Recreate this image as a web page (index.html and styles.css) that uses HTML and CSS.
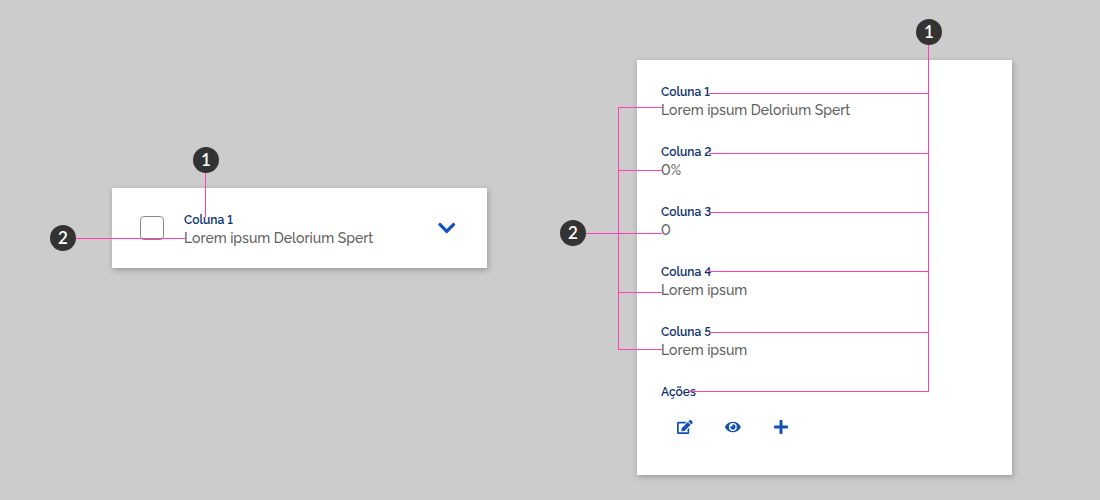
FILE: index.html
```html
<!DOCTYPE html>
<html lang="pt-BR">
<head>
<meta charset="utf-8">
<meta name="viewport" content="width=device-width, initial-scale=1">
<title>Tabela responsiva</title>
<link rel="stylesheet" href="styles.css">
</head>
<body>
<main class="stage">
  <section class="card card-collapsed">
    <input class="check" type="checkbox" id="row-check" aria-labelledby="row-label">
    <label class="summary" for="row-check" id="row-label">
      <span class="label">Coluna 1</span>
      <span class="value">Lorem ipsum Delorium Spert</span>
    </label>
    <button class="toggle" type="button" aria-label="Expandir">
      <svg class="chevron" viewBox="0 0 448 512" aria-hidden="true"><path d="M207.029 381.476L12.686 187.132c-9.373-9.373-9.373-24.569 0-33.941l22.667-22.667c9.357-9.357 24.522-9.375 33.901-.04L224 284.505l154.745-154.021c9.379-9.335 24.544-9.317 33.901.04l22.667 22.667c9.373 9.373 9.373 24.569 0 33.941L240.971 381.476c-9.373 9.372-24.569 9.372-33.942 0z"/></svg>
    </button>
    <i class="line v a-label"></i>
    <i class="line h a-value"></i>
    <span class="badge a-one">1</span>
    <span class="badge a-two">2</span>
  </section>

  <section class="card card-expanded">
    <dl class="fields">
      <div><dt class="label">Coluna 1</dt><dd class="value">Lorem ipsum Delorium Spert</dd></div>
      <div><dt class="label">Coluna 2</dt><dd class="value">0%</dd></div>
      <div><dt class="label">Coluna 3</dt><dd class="value">0</dd></div>
      <div><dt class="label">Coluna 4</dt><dd class="value">Lorem ipsum</dd></div>
      <div><dt class="label">Coluna 5</dt><dd class="value">Lorem ipsum</dd></div>
      <div>
        <dt class="label">Ações</dt>
        <dd class="actions">
          <button class="action" type="button" aria-label="Editar"><svg class="icon" viewBox="0 0 576 512" aria-hidden="true"><path d="M402.6 83.2l90.2 90.2c3.8 3.8 3.8 10 0 13.8L274.4 405.6l-92.8 10.3c-12.4 1.4-22.9-9.1-21.5-21.5l10.3-92.8L388.8 83.2c3.8-3.8 10-3.8 13.8 0zm162-22.9l-48.8-48.8c-15.2-15.2-39.9-15.2-55.2 0l-35.4 35.4c-3.8 3.8-3.8 10 0 13.8l90.2 90.2c3.8 3.8 10 3.8 13.8 0l35.4-35.4c15.2-15.3 15.2-40 0-55.2zM384 346.2V448H64V128h229.8c3.2 0 6.2-1.3 8.5-3.5l40-40c7.6-7.6 2.2-20.5-8.5-20.5H48C21.5 64 0 85.5 0 112v352c0 26.5 21.5 48 48 48h352c26.5 0 48-21.5 48-48V306.2c0-10.7-12.9-16-20.5-8.5l-40 40c-2.2 2.3-3.5 5.3-3.5 8.5z"/></svg></button>
          <button class="action" type="button" aria-label="Visualizar"><svg class="icon" viewBox="0 0 576 512" aria-hidden="true"><path d="M572.52 241.4C518.29 135.59 410.93 64 288 64S57.68 135.64 3.48 241.41a32.35 32.35 0 0 0 0 29.19C57.71 376.41 165.07 448 288 448s230.32-71.64 284.52-177.41a32.35 32.35 0 0 0 0-29.19zM288 400a144 144 0 1 1 144-144 143.93 143.93 0 0 1-144 144zm0-240a95.31 95.31 0 0 0-25.31 3.79 47.85 47.85 0 0 1-66.9 66.9A95.78 95.78 0 1 0 288 160z"/></svg></button>
          <button class="action" type="button" aria-label="Adicionar"><svg class="icon icon-plus" viewBox="0 0 448 512" aria-hidden="true"><path d="M416 208H272V64c0-17.67-14.33-32-32-32h-32c-17.67 0-32 14.33-32 32v144H32c-17.67 0-32 14.33-32 32v32c0 17.67 14.33 32 32 32h144v144c0 17.67 14.33 32 32 32h32c17.67 0 32-14.33 32-32V304h144c17.67 0 32-14.33 32-32v-32c0-17.67-14.33-32-32-32z"/></svg></button>
        </dd>
      </div>
    </dl>
    <i class="line v b-right"></i>
    <i class="line h b-label l1"></i>
    <i class="line h b-label l2"></i>
    <i class="line h b-label l3"></i>
    <i class="line h b-label l4"></i>
    <i class="line h b-label l5"></i>
    <i class="line h b-label l6"></i>
    <i class="line v b-left"></i>
    <i class="line h b-value v1"></i>
    <i class="line h b-value v2"></i>
    <i class="line h b-value v3"></i>
    <i class="line h b-value v4"></i>
    <i class="line h b-value v5"></i>
    <span class="badge b-one">1</span>
    <span class="badge b-two">2</span>
  </section>
</main>
</body>
</html>
```
FILE: styles.css
```css
* { box-sizing: border-box; }

body {
  margin: 0;
  background: #ccc;
  color: #606060;
  font: 500 14px/20px Raleway, "Open Sans", sans-serif;
  font-variant-numeric: lining-nums;
}

.stage {
  display: flex;
  align-items: flex-start;
  gap: 150px;
  min-height: 100vh;
  padding: 60px 88px 24px 112px;
}

.card {
  position: relative;
  flex: 1;
  background: #fff;
  box-shadow: 1px 2px 6px rgba(0, 0, 0, 0.25);
}

.card-collapsed {
  display: flex;
  align-items: center;
  margin-top: 128px;
  padding: 20px;
  padding-left: 28px;
}

.card-expanded { padding: 24px; }

.check {
  appearance: none;
  width: 24px;
  height: 24px;
  margin: 0 20px 0 0;
  border: 1px solid #888;
  border-radius: 4px;
  background: #fff;
}

.check:checked { background: #1351b4; }

.summary {
  flex: 1;
  padding-top: 4px;
}

.label {
  display: block;
  color: #0c326f;
  font-size: 12px;
  font-weight: 600;
  line-height: 16px;
}

.value {
  display: block;
  margin: 0;
}

.toggle,
.action {
  display: grid;
  place-items: center;
  padding: 0;
  border: 0;
  background: none;
  color: #1351b4;
  cursor: pointer;
}

.toggle {
  width: 40px;
  height: 40px;
}

.action {
  width: 48px;
  height: 48px;
}

.chevron,
.icon {
  display: block;
  fill: currentColor;
}

.chevron { height: 20px; }
.icon { height: 14px; }
.icon-plus { height: 16px; }

.fields {
  display: grid;
  gap: 24px;
  margin: 0;
}

.actions {
  display: flex;
  margin: 3px 0 0;
}

/* Numbered callouts and their connector lines */
.badge {
  position: absolute;
  width: 26px;
  height: 26px;
  border-radius: 50%;
  background: #333;
  color: #fff;
  font: 600 17px/26px Lato, sans-serif;
  text-align: center;
}

.line {
  position: absolute;
  background: #ff40b4;
  pointer-events: none;
}

.h { height: 1px; }
.v { width: 1px; }

.a-one { left: 81px; top: -41px; }
.a-two { left: -62px; top: 37px; }
.a-label { left: 93px; top: -15px; height: 44px; }
.a-value { left: -36px; top: 50px; width: 109px; }

.b-one { right: 70px; top: -41px; }
.b-two { left: -77px; top: 160px; }
.b-right { right: 83px; top: -15px; height: 346px; }
.b-label { left: 72px; right: 83px; }
.l1 { top: 33px; }
.l2 { top: 93px; }
.l3 { top: 152px; }
.l4 { top: 211px; }
.l5 { top: 272px; }
.l6 { top: 331px; left: 52px; }
.b-left { left: -19px; top: 47px; height: 243px; }
.b-value { left: -19px; width: 44px; }
.v1 { top: 47px; }
.v2 { top: 110px; }
.v3 { top: 173px; left: -51px; width: 76px; }
.v4 { top: 232px; }
.v5 { top: 289px; }
```
